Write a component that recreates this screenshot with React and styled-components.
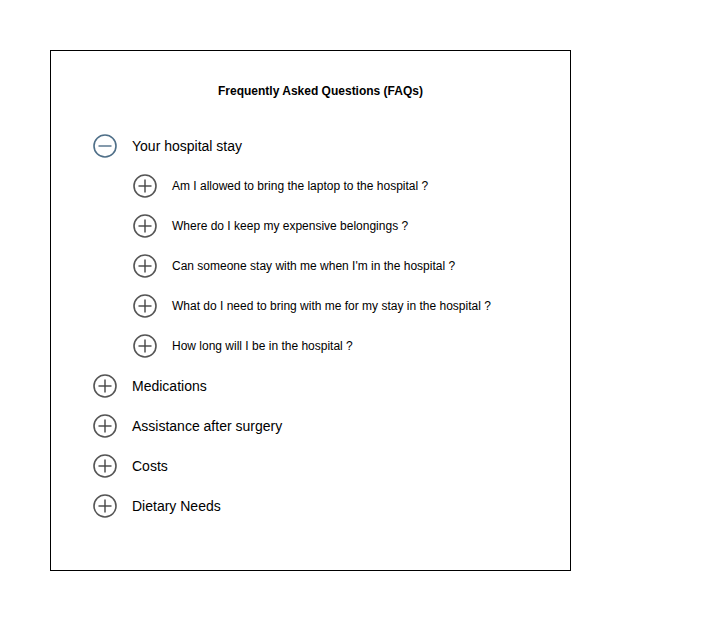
import React, { useState } from "react";
import styled, { createGlobalStyle } from "styled-components";

const GlobalStyle = createGlobalStyle`
  body {
    margin: 0;
    background: #ffffff;
    font-family: "Liberation Sans", Arial, sans-serif;
    color: #000;
  }
`;

const Page = styled.div`
  padding: 50px 0 0 50px;
`;

const Card = styled.div`
  box-sizing: border-box;
  width: 521px;
  height: 521px;
  border: 1px solid #000;
  padding: 33px 22px 0 42px;
`;

const Title = styled.h1`
  margin: 0 0 28px;
  font-size: 12px;
  line-height: 14px;
  font-weight: bold;
  text-align: center;
`;

const List = styled.div`
  display: flex;
  flex-direction: column;
`;

const Row = styled.div`
  display: flex;
  align-items: center;
  gap: 15px;
  height: 40px;
  padding-left: ${(p) => (p.$sub ? "40px" : "0")};
  cursor: pointer;
`;

const Label = styled.span`
  font-size: ${(p) => (p.$sub ? "12px" : "14px")};
  line-height: 16px;
`;

const IconWrap = styled.span`
  display: flex;
  width: 24px;
  height: 24px;
  flex-shrink: 0;
  margin-top: -1px;
`;

const ToggleIcon = ({ open }) => (
  <IconWrap>
    <svg width="24" height="24" viewBox="0 0 24 24">
      <circle
        cx="12"
        cy="12"
        r="11"
        fill="none"
        stroke={open ? "#4f6f88" : "#555"}
        strokeWidth="1.6"
      />
      <line
        x1="5.5"
        y1="12"
        x2="18.5"
        y2="12"
        stroke={open ? "#4f6f88" : "#444"}
        strokeWidth="1.4"
      />
      {!open && (
        <line x1="12" y1="5.5" x2="12" y2="18.5" stroke="#444" strokeWidth="1.4" />
      )}
    </svg>
  </IconWrap>
);

const sections = [
  {
    title: "Your hospital stay",
    questions: [
      "Am I allowed to bring the laptop to the hospital ?",
      "Where do I keep my expensive belongings ?",
      "Can someone stay with me when I'm in the hospital ?",
      "What do I need to bring with me for my stay in the hospital ?",
      "How long will I be in the hospital ?",
    ],
  },
  { title: "Medications", questions: [] },
  { title: "Assistance after surgery", questions: [] },
  { title: "Costs", questions: [] },
  { title: "Dietary Needs", questions: [] },
];

const App = () => {
  const [openSections, setOpenSections] = useState([0]);

  const toggle = (index) => {
    if (openSections.includes(index)) {
      setOpenSections(openSections.filter((i) => i !== index));
    } else {
      setOpenSections([...openSections, index]);
    }
  };

  return (
    <Page>
      <GlobalStyle />
      <Card>
        <Title>Frequently Asked Questions (FAQs)</Title>
        <List>
          {sections.map((section, index) => {
            const open = openSections.includes(index);
            return (
              <React.Fragment key={section.title}>
                <Row onClick={() => toggle(index)}>
                  <ToggleIcon open={open} />
                  <Label>{section.title}</Label>
                </Row>
                {open &&
                  section.questions.map((q) => (
                    <Row $sub key={q}>
                      <ToggleIcon />
                      <Label $sub>{q}</Label>
                    </Row>
                  ))}
              </React.Fragment>
            );
          })}
        </List>
      </Card>
    </Page>
  );
};

export default App;
